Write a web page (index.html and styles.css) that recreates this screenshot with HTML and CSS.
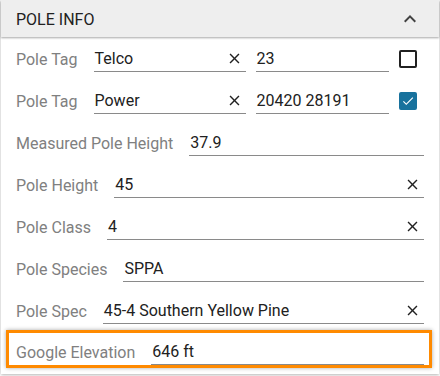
FILE: index.html
```html
<!DOCTYPE html>
<html>
<head>
<meta charset="utf-8">
<link rel="stylesheet" href="styles.css">
</head>
<body>
<div class="card">
  <div class="header">
    <span class="title">POLE INFO</span>
    <svg class="chev" viewBox="0 0 24 24" width="24" height="24"><path d="M12 8l-6 6 1.41 1.41L12 10.83l4.59 4.58L18 14z" fill="#424242"/></svg>
  </div>
  <div class="body">
    <div class="row">
      <span class="label">Pole Tag</span>
      <div class="field f-tag"><span class="val">Telco</span><svg class="x" viewBox="0 0 24 24"><path d="M19 6.41L17.59 5 12 10.59 6.41 5 5 6.41 10.59 12 5 17.59 6.41 19 12 13.41 17.59 19 19 17.59 13.41 12z"/></svg></div>
      <div class="field f-num"><span class="val">23</span></div>
      <span class="cb"></span>
    </div>
    <div class="row">
      <span class="label">Pole Tag</span>
      <div class="field f-tag"><span class="val">Power</span><svg class="x" viewBox="0 0 24 24"><path d="M19 6.41L17.59 5 12 10.59 6.41 5 5 6.41 10.59 12 5 17.59 6.41 19 12 13.41 17.59 19 19 17.59 13.41 12z"/></svg></div>
      <div class="field f-num"><span class="val">20420 28191</span></div>
      <span class="cb checked"><svg viewBox="0 0 24 24"><path d="M9 16.17L4.83 12l-1.42 1.41L9 19 21 7l-1.41-1.41z" fill="#fff"/></svg></span>
    </div>
    <div class="row">
      <span class="label">Measured Pole Height</span>
      <div class="field grow"><span class="val">37.9</span></div>
    </div>
    <div class="row">
      <span class="label">Pole Height</span>
      <div class="field grow"><span class="val">45</span><svg class="x" viewBox="0 0 24 24"><path d="M19 6.41L17.59 5 12 10.59 6.41 5 5 6.41 10.59 12 5 17.59 6.41 19 12 13.41 17.59 19 19 17.59 13.41 12z"/></svg></div>
    </div>
    <div class="row">
      <span class="label">Pole Class</span>
      <div class="field grow"><span class="val">4</span><svg class="x" viewBox="0 0 24 24"><path d="M19 6.41L17.59 5 12 10.59 6.41 5 5 6.41 10.59 12 5 17.59 6.41 19 12 13.41 17.59 19 19 17.59 13.41 12z"/></svg></div>
    </div>
    <div class="row">
      <span class="label">Pole Species</span>
      <div class="field grow"><span class="val">SPPA</span></div>
    </div>
    <div class="row">
      <span class="label">Pole Spec</span>
      <div class="field grow"><span class="val">45-4 Southern Yellow Pine</span><svg class="x" viewBox="0 0 24 24"><path d="M19 6.41L17.59 5 12 10.59 6.41 5 5 6.41 10.59 12 5 17.59 6.41 19 12 13.41 17.59 19 19 17.59 13.41 12z"/></svg></div>
    </div>
    <div class="row highlight">
      <span class="label">Google Elevation</span>
      <div class="field grow"><span class="val">646 ft</span></div>
    </div>
  </div>
</div>
</body>
</html>
```

FILE: styles.css
```css
html, body {
  margin: 0;
  padding: 0;
  background: #fff;
}
body {
  font-family: Roboto, "Liberation Sans", sans-serif;
  font-size: 16px;
  color: #212121;
  width: 440px;
  height: 376px;
  overflow: hidden;
}
.card {
  margin: 0 1px;
  height: 374px;
  background: #fff;
  box-shadow: 0 1px 3px rgba(0,0,0,0.3);
}
.header {
  height: 37px;
  background: #eeeeee;
  display: flex;
  align-items: center;
  justify-content: space-between;
  padding: 0 15px 0 15px;
  box-shadow: 0 1px 2px rgba(0,0,0,0.35);
  position: relative;
}
.title {
  font-size: 16px;
  color: #212121;
  padding-top: 1px;
}
.chev {
  width: 24px;
  height: 24px;
  margin-right: 2px;
}
.body {
  padding-top: 1px;
}
.row {
  height: 42px;
  box-sizing: border-box;
  padding: 8px 15px 0 15px;
  display: flex;
  align-items: flex-start;
  gap: 16px;
}
.label {
  color: #808080;
  line-height: 26px;
  white-space: nowrap;
  padding-top: 1px;
}
.field {
  height: 26px;
  box-sizing: border-box;
  border-bottom: 1px solid #8a8a8a;
  display: flex;
  align-items: center;
  justify-content: space-between;
  padding-left: 1px;
}
.val {
  color: #212121;
}
.f-tag {
  width: 152px;
  flex: none;
}
.f-num {
  width: 133px;
  flex: none;
  margin-left: -6px;
}
.grow {
  flex: 1;
}
.x {
  width: 17px;
  height: 17px;
  fill: #212121;
  margin-right: 3px;
  flex: none;
}
.cb {
  width: 18px;
  height: 18px;
  box-sizing: border-box;
  border: 2px solid #212121;
  border-radius: 2px;
  margin-top: 4px;
  margin-left: -6px;
  display: flex;
  align-items: center;
  justify-content: center;
  flex: none;
}
.cb.checked {
  background: #18729d;
  border-color: #18729d;
}
.cb.checked svg {
  width: 16px;
  height: 16px;
}
.highlight {
  height: 38px;
  margin: -2px 7px 0 5px;
  padding: 6px 5px 0 7px;
  border: 3px solid #ff8a00;
  box-shadow: 0 0 4px rgba(0,0,0,0.35);
}
```
